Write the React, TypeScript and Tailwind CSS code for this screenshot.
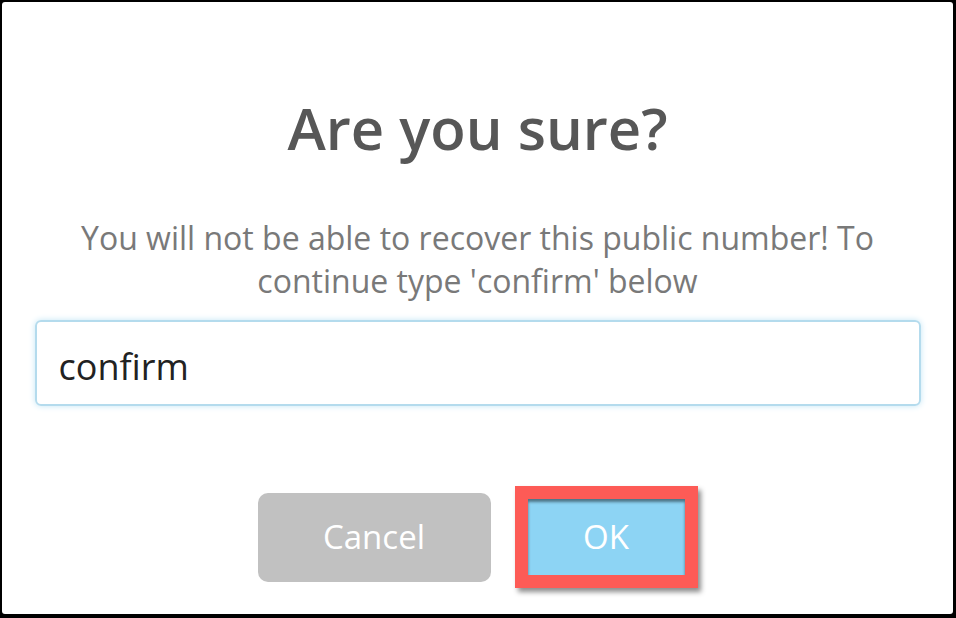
const App: React.FC = () => {
  return (
    <div className="w-[956px] h-[618px] bg-black pt-[2px] pl-[2px] pr-[3px] pb-[4px]">
      <div
        className="w-full h-full bg-white rounded-[3px] flex flex-col items-center px-[32px] pt-[90px]"
        style={{ fontFamily: '"Open Sans", "Liberation Sans", sans-serif' }}
      >
        <h2 className="text-[58px] leading-[72px] font-semibold text-[#575757]">Are you sure?</h2>

        <p className="mt-[52px] text-[32px] leading-[43px] text-[#797979] text-center">
          You will not be able to recover this public number! To
          <br />
          continue type 'confirm' below
        </p>

        <input
          readOnly
          value="confirm"
          className="mt-[18px] w-[886px] h-[86px] border-2 border-[#b4dbed] rounded-[6px] px-[22px] pt-[6px] text-[36px] text-[#222] outline-none shadow-[0_0_6px_#c4e6f5]"
          style={{ fontFamily: '"Open Sans", "Liberation Sans", sans-serif' }}
        />

        <div className="mt-[80px] flex items-center gap-[24px]">
          <button className="w-[233px] h-[89px] rounded-[10px] bg-[#c1c1c1] text-white text-[33px]">
            Cancel
          </button>
          <div className="border-[13px] border-[#fd5b56] shadow-[3px_4px_5px_rgba(0,0,0,0.45)]">
            <button className="w-[157px] h-[76px] bg-[#8dd4f4] text-white text-[33px] shadow-[inset_0_3px_3px_rgba(0,0,0,0.45)]">
              OK
            </button>
          </div>
        </div>
      </div>
    </div>
  );
};

export default App;
